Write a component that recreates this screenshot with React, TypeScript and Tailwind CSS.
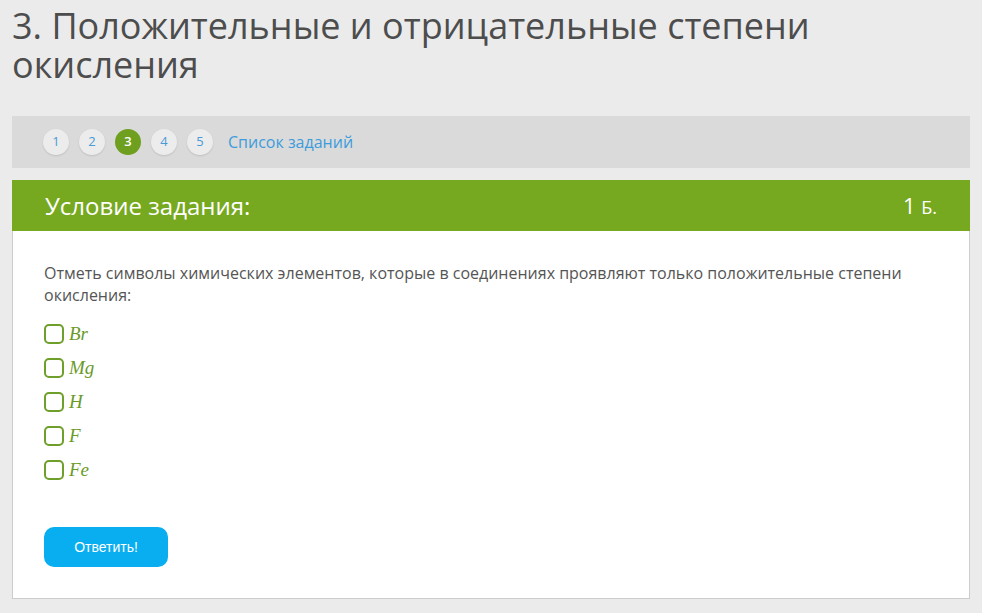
import React from "react";

const options = ["Br", "Mg", "H", "F", "Fe"];

export default function App() {
  return (
    <div
      className="min-h-[613px] bg-[#ebebeb] px-3 pt-[6px]"
      style={{ fontFamily: '"Open Sans", sans-serif' }}
    >
      <h1 className="text-[36px] leading-[39px] text-[#4d4d4d] font-normal">
        3. Положительные и отрицательные степени
        <br />
        окисления
      </h1>
      <div className="mt-[32px] h-[52px] bg-[#dadada] flex items-center pl-[31px] gap-[10px]">
        {[1, 2, 3, 4, 5].map((n) =>
          n === 3 ? (
            <div
              key={n}
              className="w-[26px] h-[26px] rounded-full bg-[#6f9f1f] text-white text-[13px] font-semibold flex items-center justify-center"
            >
              {n}
            </div>
          ) : (
            <div
              key={n}
              className="w-[26px] h-[26px] rounded-full bg-[#ececec] shadow-[0_1px_2px_rgba(0,0,0,0.12)] text-[#4a9ad8] text-[13px] flex items-center justify-center"
            >
              {n}
            </div>
          )
        )}
        <span className="text-[16px] text-[#3d9cdb] ml-[5px]">Список заданий</span>
      </div>
      <div className="mt-[12px] border border-[#cccccc] bg-white">
        <div className="h-[51px] -mx-px -mt-px bg-[#76a920] flex items-center justify-between pl-[33px] pr-[33px] text-white">
          <span className="text-[24px]">Условие задания:</span>
          <span className="text-[22px]">
            1 <span className="text-[18px]">Б.</span>
          </span>
        </div>
        <div className="px-[31px] pt-[31px] pb-[31px]">
          <p className="text-[16px] leading-[22px] text-[#555555]">
            Отметь символы химических элементов, которые в соединениях проявляют только положительные степени окисления:
          </p>
          <div className="mt-[18px] flex flex-col gap-[14px]">
            {options.map((o) => (
              <label key={o} className="flex items-center gap-[5px] h-[20px]">
                <span className="w-[20px] h-[20px] rounded-[5px] border-2 border-[#6f9f2b] bg-white" />
                <span
                  className="italic text-[19px] text-[#6a9a28]"
                  style={{ fontFamily: '"Liberation Serif", "DejaVu Serif", serif' }}
                >
                  {o}
                </span>
              </label>
            ))}
          </div>
          <button
            className="mt-[47px] w-[124px] h-[40px] rounded-[10px] bg-[#09aef0] text-white text-[14px]"
            style={{ fontFamily: '"Liberation Sans", Arial, sans-serif' }}
          >
            Ответить!
          </button>
        </div>
      </div>
    </div>
  );
}
